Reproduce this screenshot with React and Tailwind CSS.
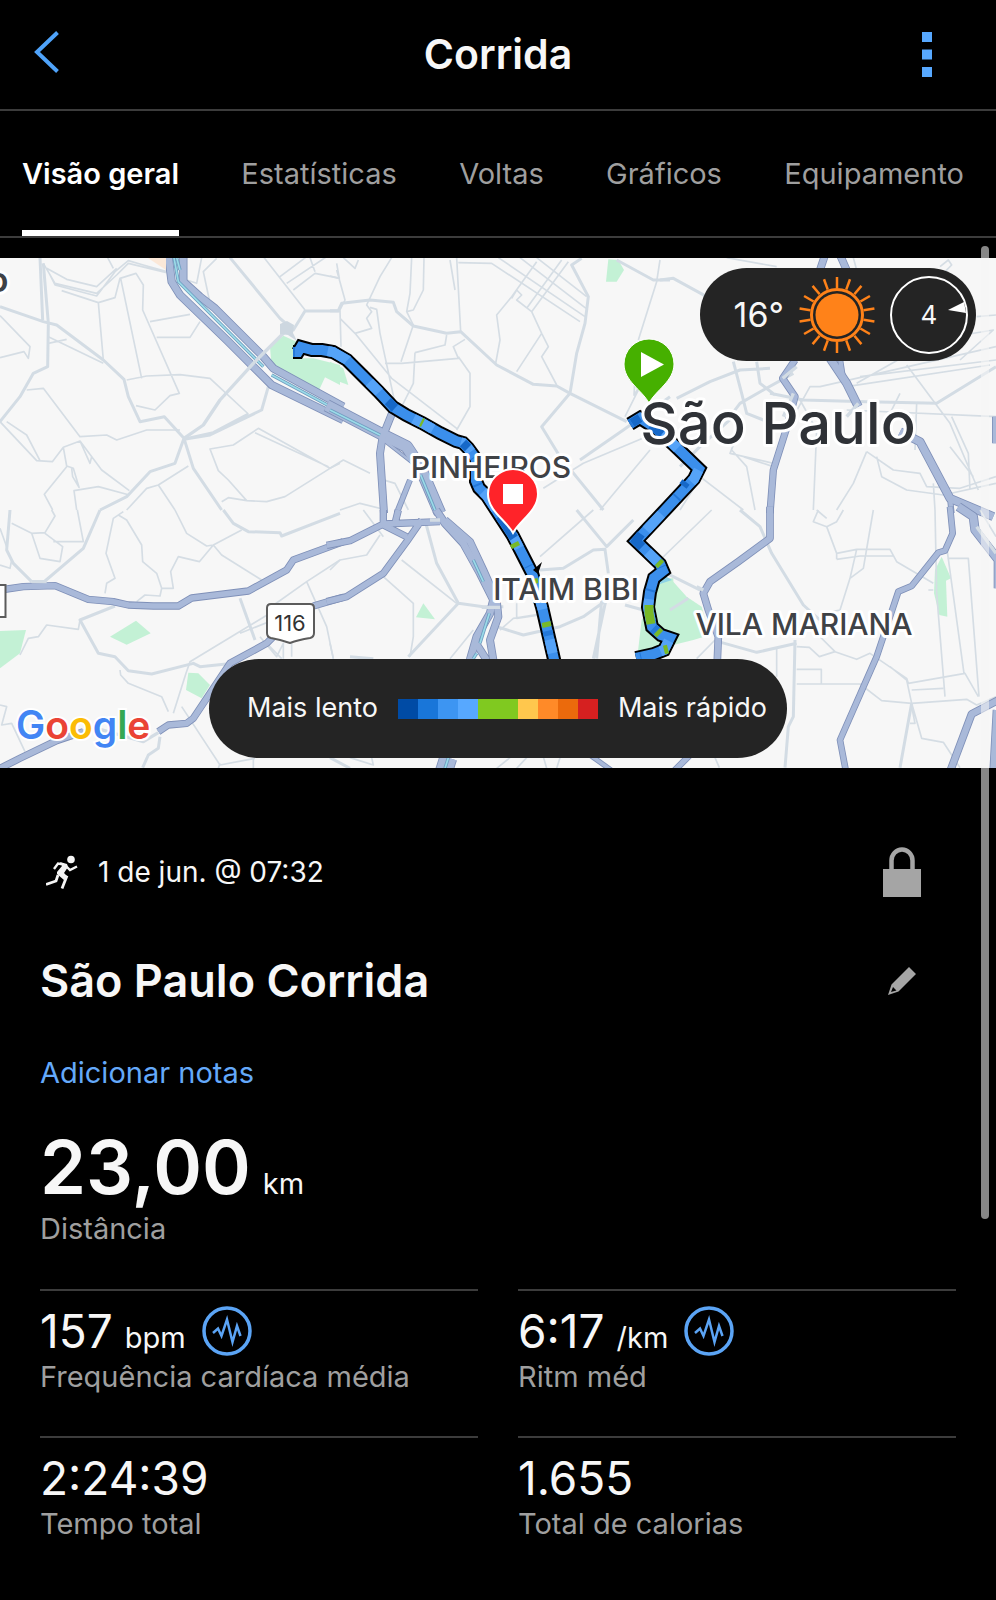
const tabs = ["Visão geral", "Estatísticas", "Voltas", "Gráficos", "Equipamento"];

const paceColors = [
  "bg-[#004ba5]",
  "bg-[#1976d9]",
  "bg-[#3d95f2]",
  "bg-[#57a8ff]",
  "bg-[#80c920]",
  "bg-[#80c920]",
  "bg-[#ffc74d]",
  "bg-[#ff8a28]",
  "bg-[#eb6a0c]",
  "bg-[#d62020]",
];

const stats = [
  { value: "157", unit: "bpm", label: "Frequência cardíaca média", chart: true },
  { value: "6:17", unit: "/km", label: "Ritm méd", chart: true },
  { value: "2:24:39", label: "Tempo total" },
  { value: "1.655", label: "Total de calorias" },
];

// Each tile is drawn at 3x in its own coordinates.
const tiles = [
  {
    x: 0,
    y: 250,
    parks: ["M810 290L850 257L890 275L885 325L940 325L1020 345V405L975 382L955 425L815 350Z"],
    thin: [
      "M0 197L90 290L85 325L72 305L0 323M130 40L165 100L290 130L350 75L385 40L500 68M150 75L165 105L290 138L345 65L385 32L430 45L500 65M140 55L200 88L290 110L350 55",
      "M185 122L295 158L345 143L360 85L408 70L430 105L428 180L538 430L510 437L465 480L408 467M362 85L425 385M295 158L310 330M323 23L340 55",
      "M450 215L570 193M470 262H570L600 215M145 260L310 340M145 280L200 268M380 390L440 378L540 374L630 385L745 492",
      "M790 20L915 180M880 120L945 70L1020 85M930 23L945 65M840 80L920 20M860 100L1010 0M628 150L610 65L650 25M560 90L590 100L605 23",
      "M0 515L110 632L157 635L190 592L240 573L270 640L275 620M20 515L80 555L120 632M80 420L130 415L240 560L320 555L350 570L440 540H540",
      "M240 573L305 660L388 722M190 592L200 648L220 655L237 712L218 680L215 655M200 650L133 733L158 780M230 780L222 722L295 710L388 735",
      "M630 597L700 585L775 535L990 655L855 740L800 755L740 752L685 690L655 662ZM765 548L985 650M990 655L1020 640M380 780L440 715L475 705L565 648M475 705L525 780M665 755L685 743L740 752",
    ],
    main: [
      "M0 170L130 215L170 225L310 330L372 388L385 440L420 515L493 500L552 565M120 23L128 210M130 40L145 220L143 350L100 370L60 440L0 515M690 23L840 205L880 240L915 183H1020",
      "M552 565L525 640L450 665L380 740L300 780M552 565L580 655L665 780M805 410L785 480L630 555L552 568L640 548L745 492",
    ],
    highways: [
      { d: "M505 15L515 95L540 135L680 270L815 405L1030 510", w: 25 },
      { d: "M550 15V95L600 140L645 175L790 320L820 355L1030 470", w: 25 },
    ],
    water: ["M522 23L535 95L700 260L790 350", "M815 375L1020 485", "M530 23L540 60"],
    over: ["M860 240L760 340L660 450L610 525L552 565"],
  },
  {
    x: 330,
    y: 250,
    parks: ["M0 335L40 355L55 405L0 385Z", "M835 28L865 30L882 60L860 95H828Z"],
    thin: [
      "M20 60L45 150L30 180L33 290M40 23L75 55L85 30M0 78L28 85L20 40M185 23L150 80L110 165L125 185L110 205L125 235L75 250L30 205M120 172L140 178L150 250L195 460M75 250L185 385L380 535",
      "M245 23L240 130L230 185L250 180L280 120L282 23M230 185L250 225L213 335M165 340H215L385 325L370 290L405 268M385 320L420 370V470L380 540M255 308L250 400L210 480M255 308L345 285L350 255M360 30L375 120",
      "M380 23L392 245M385 38L485 40L750 215M505 23L765 200M570 23L768 175M620 23L770 140M620 35L545 140L500 195L510 270L497 340M545 145L560 120L575 135L560 150L605 185L635 250L655 290L635 320L680 405M635 250L560 365M695 30L590 175M715 35L605 185",
      "M990 30L980 95L925 270M885 500L935 400L912 435L915 380M1020 530L760 640L640 715M960 600L810 780M0 655L40 630L120 670M145 685L195 700L235 780M30 780L90 760L170 780",
    ],
    main: [
      "M0 182H25L35 160L120 150L190 157L200 185L250 228L350 250L392 245L500 345L610 403L680 408L720 430L890 515",
      "M755 25L725 45L775 140L765 220L740 310L720 430L635 530L690 620L820 780M860 30L970 90H1020M750 630L880 540L1020 440",
    ],
    highways: [
      { d: "M-10 466L160 555L230 590L270 650L330 790", w: 38 },
      { d: "M190 480L158 560L150 610L162 790", w: 24 },
      { d: "M240 690L200 790", w: 18 },
      { d: "M160 570L250 640", w: 12 },
    ],
    water: ["M0 480L150 555", "M272 675L315 780"],
    over: [],
  },
  {
    x: 660,
    y: 250,
    parks: [],
    thin: [
      "M400 500L450 410H480L1008 290M740 345L870 520L955 720M590 400L820 270L1000 240L900 330M420 450L470 540L460 780M560 480L1008 500M950 200L1008 195M690 490L720 430",
      "M620 605L580 700L530 780M620 605L700 660L780 670L800 710L900 715L1008 680M650 620L665 680L740 720L850 735L1008 700M875 500L925 610L930 720M215 600L260 650L285 780M150 560H230L210 610L340 640M120 680L250 780M250 620L340 650",
      "M130 670L60 780M870 590L940 680M200 23L350 50M840 50L865 30L875 45L850 70M770 460L765 600M580 23L590 60M820 700L825 780M600 380L1008 330M560 410L990 345",
    ],
    main: [
      "M0 90L40 85L140 140M50 445L150 395L240 360L330 355M220 335L245 430L260 490L310 510M290 335L300 400L345 435",
      "M210 500L240 460L310 420L400 370M330 430L430 450L620 455L830 460L1008 350M60 650L120 590L220 500",
    ],
    highways: [
      { d: "M405 330L368 385L405 440L378 540L340 660L330 790", w: 22 },
      { d: "M495 15L480 60M540 15L560 60", w: 24 },
      { d: "M510 325L560 400L595 470M720 545L780 575L870 745L1000 800", w: 27 },
      { d: "M540 325L550 390M870 745L875 790M1005 500V580", w: 18 },
    ],
    water: [],
    over: ["M368 385L410 350M400 430L370 500M560 500L595 460"],
  },
  {
    x: 0,
    y: 510,
    parks: ["M0 363L78 360L60 430L0 475Z", "M330 380L408 332L452 370L380 404Z", "M565 488L595 490L630 525L605 565L558 540Z"],
    thin: [
      "M35 40L95 70L135 68L165 18L155 0M95 70L120 145L180 155L188 110L135 70M160 95H250L232 0M0 165L30 175L35 150M0 55L20 110M315 250L320 220L345 205L318 130L340 25L370 5M355 15L380 30L425 105L428 155L470 190L485 235L480 258L435 255L410 275",
      "M485 235H520L512 185L535 140L598 155L640 105L620 108L560 70L525 0M640 105L725 60M640 105L665 135L785 210M60 435L85 385L115 380L140 345L235 358L240 330",
      "M1020 150L920 215L800 300L810 310L570 455L558 490L520 610M920 215L940 260L980 350L1000 446M820 330L720 370M360 480L362 495L385 520L485 560L505 605M0 585L20 590L5 645L35 640L75 725M545 590L660 765L765 745M655 775L660 760M800 400L845 446M780 380L830 440L850 400V446M875 400V440M760 743V775",
    ],
    main: [
      "M345 288L240 330L295 430L345 440L385 482L455 492L580 460L600 470L700 460M670 0L700 40L745 65L840 68L845 78L1020 10M720 265L765 390",
      "M30 0L20 120L40 160L95 215M300 0L250 115L135 213M480 680L475 715L445 735L428 773",
    ],
    highways: [
      { d: "M0 240L70 230L165 227L265 268L340 275L385 285L460 288H535L575 264L745 243L860 180L880 150L1030 95", w: 22 },
      { d: "M0 775L60 745L170 692L250 665M475 665L505 645L560 640L580 625L690 460L800 400L820 380M940 288L1030 262", w: 22 },
    ],
    water: [],
    over: ["M250 663L290 655L360 675L430 695L475 668", "M95 215H140"],
  },
  {
    x: 330,
    y: 510,
    parks: ["M1030 205H985L960 290L935 330L922 440L1030 412Z", "M280 280L315 328L258 322Z"],
    thin: [
      "M215 150L380 280M160 200L250 280V380L240 440M0 180L30 150L110 135L150 75M560 280V325L630 315M630 140L790 0M510 360L550 325L630 312M430 360L360 446M100 0L160 80M0 400L10 446M60 743L130 765L125 743M500 775L540 743M590 743L560 775M690 743L680 775M640 740L650 775",
    ],
    main: [
      "M285 30L320 160L385 280L460 290H520M385 280L235 440M500 350L580 375L690 350L760 320L830 270M630 180L700 175L790 120L825 118L835 190",
      "M740 0L830 110L910 30M885 285L940 300M830 260L790 446M815 270L800 446M0 743L60 775M60 440L130 446",
    ],
    highways: [
      { d: "M-10 106L60 92L160 42L330 35M160 45L230 80M160 45V0M205 0L195 40M275 30L230 95L160 190L50 260L-10 275", w: 22 },
      { d: "M318 0L345 40L400 100L450 190L490 270L480 310L440 380L420 450", w: 25 },
      { d: "M345 30L420 95L460 180L500 270L505 320L480 390L490 450M435 395L470 450", w: 24 },
      { d: "M355 743L340 790", w: 54 },
      { d: "M780 735L850 785", w: 16 },
    ],
    water: ["M355 743L345 775", "M430 150L460 215", "M478 310L450 400", "M440 430L430 446"],
    over: ["M330 30L300 30M455 292L510 292"],
  },
  {
    x: 660,
    y: 510,
    parks: ["M0 205L35 210L80 260L125 290L150 375L100 390L0 415Z", "M845 140L873 205L858 212L862 320L838 315L822 250L825 180Z"],
    thin: [
      "M0 150L155 0M350 415V500M165 390L110 446M410 410L448 412L478 440L525 425L470 370M525 425L590 448L630 430L740 505L745 520L915 490L955 560M755 540L850 535M410 478H484V522M410 522H600L665 572L755 580L920 568L950 585L1008 560",
      "M862 125L912 490M862 145H925L957 560M825 0L830 250L855 560M530 148V130L500 50L460 35L475 0M530 130L590 118H690L710 155L820 220M530 148L600 138H700M590 118L570 205L610 175L640 0M570 205L540 300L490 310M500 50L530 35L550 0M960 0L1008 80M470 0L500 25",
      "M755 580L785 685L850 697L900 773M750 640H765L755 590M690 470L740 510L755 580M805 240H820M165 743L178 773",
    ],
    main: [
      "M240 0L300 50L335 130L430 285L480 330M20 190L130 245M175 395L290 427L410 400M755 580L720 773M30 300L85 265",
      "M405 390L400 620L385 650L375 773",
    ],
    highways: [
      { d: "M330 -10L330 85L235 155L150 215L130 250L145 300L175 380L172 450", w: 23 },
      { d: "M870 -10L878 70L855 122L835 128L755 228L715 245L690 320L650 440L540 690L558 785", w: 20 },
      { d: "M895 -10L940 20L945 60L1015 150V235", w: 28 },
      { d: "M1015 570L935 612L870 785M1010 600L1000 785", w: 24 },
      { d: "M90 735L40 785", w: 20 },
    ],
    water: [],
    over: ["M950 50L1008 130", "M130 240L110 230"],
  },
];

const routes = [
  "M293 352L298 352L301 347L312 350L322 350L333 352L347 360L362 375L378 391L393 407L406 415L422 423L440 433L456 441L463 443L468 448L476 459L476 481L479 488L487 496L498 513L513 536L532 573L542 607L556 668",
  "M630 424L640 418L651 425L660 432L673 444L699 469L694 479L667 508L636 541L660 564L663 571L654 578L650 592L648 607L652 627L661 635L670 638L664 650L654 654L636 658",
];

function Map() {
  return (
    <svg viewBox="0 258 996 510" className="block w-full" fontFamily="Inter, sans-serif" role="img" aria-label="Percurso">
      <rect y="258" width="996" height="510" fill="#f7f7f7" />
      {tiles.map((tile) => (
        <g key={`${tile.x}-${tile.y}`} transform={`translate(${tile.x} ${tile.y}) scale(0.33333)`} fill="none" strokeLinejoin="round">
          {tile.parks.map((d) => (
            <path key={d} d={d} fill="#c3f1d5" />
          ))}
          <path d={tile.thin.join("")} stroke="#d5dde4" strokeWidth="5" />
          <path d={tile.main.join("")} stroke="#d3dce4" strokeWidth="9" />
          {tile.highways.map((road) => (
            <path key={road.d} d={road.d} stroke="#7f90b8" strokeWidth={road.w} />
          ))}
          {tile.highways.map((road) => (
            <path key={road.d} d={road.d} stroke="#a9b9d9" strokeWidth={road.w - 5} />
          ))}
          {tile.water.map((d) => (
            <g key={d}>
              <path d={d} stroke="#6f9cc0" strokeWidth="10" />
              <path d={d} stroke="#9bdbe8" strokeWidth="5" />
            </g>
          ))}
          <path d={tile.over.join("")} stroke="#d3dce4" strokeWidth="10" />
        </g>
      ))}
      <path d="M280 324L287 321L294 325L293 333L297 341L288 335L280 334Z" fill="#cdd7e0" />
      <path d="M148 258h18v12z" fill="#fbe8d8" />
      <path d="M660 573l12 7-12 4z" fill="#8fd3e6" />

      <g fill="none" strokeLinejoin="miter">
        {routes.map((d) => (
          <g key={d}>
            <path d={d} stroke="#000" strokeWidth="14" />
            <path d={d} stroke="#3b8fec" strokeWidth="10" />
            <path d={d} stroke="#2478d8" strokeWidth="10" strokeDasharray="2 38 5 52 1 27" />
            <path d={d} stroke="#55a3f8" strokeWidth="10" strokeDasharray="14 44 22 31" strokeDashoffset="20" />
          </g>
        ))}
        <path d="M388 401L395 408M463 443L468 448M500 516L514 538M632 423L640 418M651 425L662 434M686 482L683 486M641 534L636 541L642 547" stroke="#1668c8" strokeWidth="9" />
        <path d="M649 605L649 613L651 624M658 562L661 565M514 543L516 547M533 579L534 584M546 622L547 627M657 631L660 634M668 649L664 650M421 422L423 423" stroke="#78b928" strokeWidth="9" />
      </g>
      <path d="M533 570l9-8-4 12z" />

      <g transform="translate(649 403)">
        <path d="M0 0C-7-13-25-22-25-39A25 25 0 0 1 25-39C25-22 7-13 0 0Z" fill="#46b000" stroke="#fff" strokeWidth="1" />
        <path d="M-8-51L15-38.500L-8-26Z" fill="#fff" />
      </g>

      <g fill="#3f4246" stroke="#fff" strokeWidth="6" strokeLinejoin="round" paintOrder="stroke" textAnchor="middle">
        <text x="778" y="444" fontSize="58" fontWeight="500" fill="#2f3237">São Paulo</text>
        <text x="491" y="478" fontSize="30" fontWeight="500">PINHEIROS</text>
        <text x="566" y="600" fontSize="30" fontWeight="500">ITAIM BIBI</text>
        <text x="804" y="635" fontSize="30" fontWeight="500">VILA MARIANA</text>
        <text x="-2" y="292" fontSize="34" fontWeight="600">o</text>
      </g>

      <g transform="translate(513 533)">
        <path d="M0 0C-7-13-25-22-25-39A25 25 0 0 1 25-39C25-22 7-13 0 0Z" fill="#ff2329" stroke="#fff" strokeWidth="2" />
        <path d="M-10-49h20v20h-20z" fill="#fff" />
      </g>

      <path d="M-10 585H5.500V617H-10Z" fill="#fff" stroke="#5c5c5c" strokeWidth="2" />
      <path d="M271 604H310Q314 604 314 608V633Q314 637 310 638Q298 640 290 643Q282 640 271 638Q267 637 267 633V608Q267 604 271 604Z" fill="#fff" stroke="#5c5c5c" strokeWidth="2" />
      <text x="290" y="631" fontSize="22" textAnchor="middle" fill="#333">116</text>
      <text x="16" y="739" fontSize="39" fontWeight="600" stroke="#fff" strokeWidth="4" paintOrder="stroke">
        <tspan fill="#4285f4">G</tspan>
        <tspan fill="#ea4335">o</tspan>
        <tspan fill="#fbbc05">o</tspan>
        <tspan fill="#4285f4">g</tspan>
        <tspan fill="#34a853">l</tspan>
        <tspan fill="#ea4335">e</tspan>
      </text>
    </svg>
  );
}

function SunIcon() {
  const rays = Array.from({ length: 18 }, (_, i) => i * 20);
  return (
    <svg viewBox="-39 -39 78 78" className="size-[78px]" aria-hidden="true">
      <circle r="21.500" fill="#ff8219" />
      <circle r="25.500" fill="none" stroke="#ff8219" strokeWidth="3" />
      {rays.map((angle) => (
        <path key={angle} d="M0-27V-38" stroke="#ff8219" strokeWidth="2.500" transform={`rotate(${angle})`} />
      ))}
    </svg>
  );
}

function ChartIcon() {
  return (
    <svg viewBox="0 0 50 50" className="size-[50px]" fill="none" stroke="#5ba4f5" aria-hidden="true">
      <circle cx="25" cy="25" r="23" strokeWidth="3.500" />
      <path d="M11 27L16 22.500L19.500 30L25 13.500L30.500 36L35 20L38.500 30" strokeWidth="2.500" strokeLinejoin="miter" />
    </svg>
  );
}

function RunnerIcon() {
  return (
    <svg viewBox="0 0 32 34" className="h-[34px] w-8" fill="none" stroke="#f5f5f5" aria-hidden="true">
      <circle cx="25" cy="4.500" r="3.800" fill="#f5f5f5" stroke="none" />
      <path d="M14 7L21 9L22 12L18 18L21 21L18 25L11 19L11 17L16 11Z" fill="#f5f5f5" stroke="none" />
      <path d="M8 14L12 8.500L18 9.500M20 11L24 15L31 11.500" strokeWidth="2.400" />
      <path d="M16 20L20.500 22L16 33.500M12 20L10 26L0 29.500" strokeWidth="2.800" />
    </svg>
  );
}

function Stat({ stat }) {
  return (
    <div className="border-t-2 border-[#3c3c3c] pt-3.5 pb-[39px]">
      <dd className="flex h-[52px] items-center text-[46px] text-[#f7f7f7]">
        <span>
          {stat.value}
          {stat.unit && <span className="ml-3 text-[29px]">{stat.unit}</span>}
        </span>
        {stat.chart && (
          <button type="button" className="ml-4" aria-label={`Gráfico: ${stat.label}`}>
            <ChartIcon />
          </button>
        )}
      </dd>
      <dt className="text-[29px] leading-10 text-[#9f9f9f]">{stat.label}</dt>
    </div>
  );
}

export default function App() {
  return (
    <div className="flex min-h-screen flex-col overflow-hidden bg-black font-['Inter',sans-serif] text-[#f7f7f7]">
      <header className="grid h-[111px] grid-cols-[1fr_auto_1fr] items-center border-b-2 border-[#3c3c3c] px-[34px]">
        <button type="button" className="justify-self-start" aria-label="Voltar">
          <svg viewBox="0 0 26 42" className="mb-1.5 h-[42px] w-[26px]" fill="none" stroke="#4fa3fa" strokeWidth="4">
            <path d="M23.500 1.500L3 21L23.500 40.500" />
          </svg>
        </button>
        <h1 className="text-[41px] font-semibold">Corrida</h1>
        <button type="button" className="mr-[30px] justify-self-end" aria-label="Mais opções">
          <svg viewBox="0 0 10 45" className="h-[45px] w-2.5" fill="#57a8ff">
            <path d="M0 0h10v10H0zM0 17.500h10v10H0zM0 35h10v10H0z" />
          </svg>
        </button>
      </header>

      <nav className="flex h-[127px] justify-between border-b-2 border-[#3c3c3c] pr-8 pl-[22px]">
        {tabs.map((tab, i) => (
          <a
            key={tab}
            href="#"
            aria-current={i === 0 ? "page" : undefined}
            className={
              i === 0
                ? "flex items-center border-b-6 border-white pt-1.5 text-[29px] font-semibold text-white"
                : "flex items-center text-[29px] text-[#9f9f9f]"
            }
          >
            {tab}
          </a>
        ))}
      </nav>

      <main className="relative flex-1 pt-5">
        <section className="relative">
          <Map />
          <div className="absolute top-2.5 right-5 flex h-[93px] items-center rounded-full bg-[#242424] pr-2 pl-[34px]">
            <span className="mr-3.5 text-[34px]">16°</span>
            <SunIcon />
            <div className="relative ml-3.5 flex size-[78px] items-center justify-center rounded-full border-2 border-white text-[26px]">
              4
              <svg viewBox="0 0 18 12" className="absolute top-6 right-0 h-3 w-[18px]" fill="#fff" aria-hidden="true">
                <path d="M0 8L16 0L18 11Z" />
              </svg>
            </div>
          </div>
          <div className="absolute inset-x-0 bottom-2.5 flex justify-center">
            <div className="flex h-[99px] items-center gap-5 rounded-full bg-[#242424] pr-5 pl-[38px] text-[27px]">
              <span>Mais lento</span>
              <div className="flex h-5">
                {paceColors.map((color, i) => (
                  <span key={i} className={`w-5 ${color}`} />
                ))}
              </div>
              <span>Mais rápido</span>
            </div>
          </div>
        </section>

        <section className="px-10 pt-[79px]">
          <div className="flex items-center pr-[35px] pl-1.5">
            <RunnerIcon />
            <time className="ml-5 text-[28px]">1 de jun. @ 07:32</time>
            <svg viewBox="0 0 38 50" className="ml-auto h-[50px] w-[38px]" role="img" aria-label="Privado">
              <path d="M8.500 24V13.500a10.500 11 0 0 1 21 0V24" fill="none" stroke="#a5a5a5" strokeWidth="4.500" />
              <path d="M0 22h38v28H0z" fill="#a5a5a5" />
            </svg>
          </div>

          <div className="mt-14 flex items-center justify-between pr-10">
            <h2 className="text-[45px] leading-[56px] font-semibold">São Paulo Corrida</h2>
            <button type="button" aria-label="Editar">
              <svg viewBox="0 0 28 28" className="size-7" fill="#a5a5a5">
                <path fillRule="evenodd" d="M21 0L28 7L10.500 24.500L0 28L3.500 17.500ZM5 20L3 25L8.500 23.500Z" />
              </svg>
            </button>
          </div>

          <a href="#" className="mt-11 block w-fit text-[29px] leading-10 text-[#64a9fa]">
            Adicionar notas
          </a>

          <dl>
            <div className="mt-8">
              <dd className="flex h-[84px] items-baseline gap-3 text-[74px] leading-[84px] font-semibold">
                23,00
                <span className="text-[29px] leading-10 font-normal">km</span>
              </dd>
              <dt className="text-[29px] leading-10 text-[#9f9f9f]">Distância</dt>
            </div>
            <div className="mt-10 grid grid-cols-2 gap-x-10">
              {stats.map((stat) => (
                <Stat key={stat.label} stat={stat} />
              ))}
            </div>
          </dl>
        </section>

        <div className="absolute top-2 right-[7px] h-5/7 w-2 rounded-full bg-[#f5f5f5]/55" />
      </main>
    </div>
  );
}
